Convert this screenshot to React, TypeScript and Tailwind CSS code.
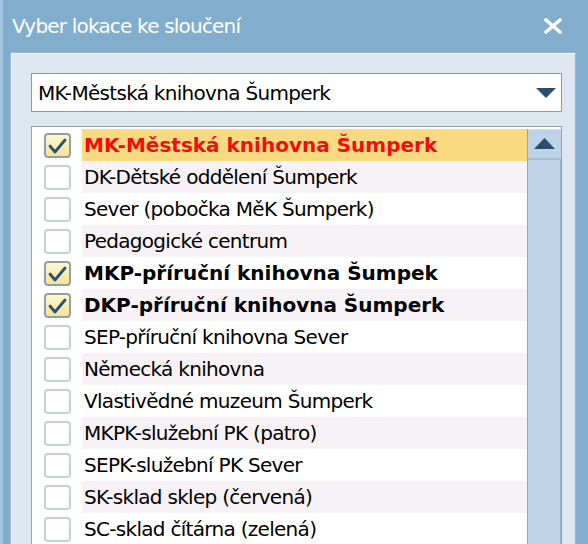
const locations = [
  { label: 'MK-Městská knihovna Šumperk', checked: true, main: true },
  { label: 'DK-Dětské oddělení Šumperk', checked: false },
  { label: 'Sever (pobočka MěK Šumperk)', checked: false },
  { label: 'Pedagogické centrum', checked: false },
  { label: 'MKP-příruční knihovna Šumpek', checked: true },
  { label: 'DKP-příruční knihovna Šumperk', checked: true },
  { label: 'SEP-příruční knihovna Sever', checked: false },
  { label: 'Německá knihovna', checked: false },
  { label: 'Vlastivědné muzeum Šumperk', checked: false },
  { label: 'MKPK-služební PK (patro)', checked: false },
  { label: 'SEPK-služební PK Sever', checked: false },
  { label: 'SK-sklad sklep (červená)', checked: false },
  { label: 'SC-sklad čítárna (zelená)', checked: false },
];

const font = 'font-["DejaVu_Sans",Tahoma,sans-serif]';

function Checkbox({ checked }: { checked: boolean }) {
  if (!checked) {
    return <div className="ml-[12px] h-[25px] w-[27px] rounded-[4px] border-2 border-[#c6d1da] bg-white" />;
  }
  return (
    <div className="ml-[12px] h-[25px] w-[27px] rounded-[4px] border-2 border-[#8e9fb1] bg-gradient-to-b from-[#fff9cf] to-[#f6e48c]">
      <svg viewBox="0 0 23 21" className="h-full w-full">
        <polyline points="4,11 9,17 19,5" fill="none" stroke="#2e4f7e" strokeWidth="2.8" strokeLinejoin="round" strokeLinecap="round" />
      </svg>
    </div>
  );
}

export default function App() {
  return (
    <div className={`relative flex h-[544px] w-[588px] flex-col overflow-hidden border-l-[3px] border-[#a4c5e0] bg-[#82aece] ${font}`}>
      {/* title bar */}
      <div className="flex h-[52px] shrink-0 items-center justify-between pl-[9px] pr-[25px]">
        <span className="text-[20px] tracking-[-0.8px] text-white">Vyber lokace ke sloučení</span>
        <svg width="20" height="16" viewBox="0 0 20 16">
          <path d="M3 2 L17 14 M17 2 L3 14" stroke="white" strokeWidth="3.6" strokeLinecap="round" />
        </svg>
      </div>

      {/* content panel */}
      <div className="ml-[7px] mr-[12px] flex-1 border border-[#9db4ca] bg-[#dee6f0] pl-[20px] pr-[13px] pt-[20px] shadow-[inset_1px_1px_0_#f4f7fa]">
        <div className="flex h-[39px] items-center justify-between border border-[#7f9bb6] bg-white pl-[6px] pr-[5px]">
          <span className="text-[20px] tracking-[-0.7px] text-black">MK-Městská knihovna Šumperk</span>
          <svg width="20" height="10" viewBox="0 0 20 10">
            <polygon points="0,0 20,0 10,10" fill="#2d4e70" />
          </svg>
        </div>

        <div className="mt-[14px] flex border border-[#8ca3bb] bg-white pt-[2px]">
          <div className="flex-1">
            {locations.map((loc, i) => (
              <div key={loc.label} className="flex h-[32px] items-center">
                <div className="flex h-full w-[50px] items-center">
                  <Checkbox checked={loc.checked} />
                </div>
                <div
                  className={`flex h-full flex-1 items-center pl-[2px] text-[20px] ${
                    loc.main ? 'bg-[#f9da80] font-bold text-[#f50d0d]' : i % 2 === 1 ? 'bg-[#f7f2f6]' : 'bg-white'
                  } ${loc.checked ? 'font-bold' : 'tracking-[-0.7px]'} ${loc.main ? '' : 'text-black'}`}
                >
                  {loc.label}
                </div>
              </div>
            ))}
          </div>

          {/* vertical scrollbar */}
          <div className="flex w-[34px] flex-col border-l border-[#8fa8c2] bg-[#bed3e8]">
            <div className="flex h-[31px] items-center justify-center border-b-2 border-[#a5bdd4] shadow-[inset_0_1px_0_#d4e2f0]">
              <svg width="21" height="11" viewBox="0 0 21 11">
                <polygon points="0,11 21,11 10.5,0" fill="#2d4e70" />
              </svg>
            </div>
            <div className="flex-1 border-r border-[#9cb2c8]" />
          </div>
        </div>
      </div>
    </div>
  );
}
